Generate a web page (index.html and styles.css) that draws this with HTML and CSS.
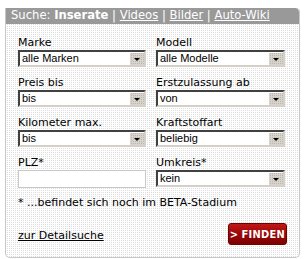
FILE: index.html
```html
<!DOCTYPE html>
<html lang="de">
<head>
  <meta charset="UTF-8">
  <title>Suche</title>
  <link rel="stylesheet" href="styles.css">
</head>
<body>
  <div class="search-box">
    <div class="search-head">
      Suche: <b>Inserate</b> | <a href="#">Videos</a> | <a href="#">Bilder</a> | <a href="#">Auto-Wiki</a>
    </div>

    <div class="search-body">
      <div class="fields">
        <div class="field">
          <label>Marke</label>
          <div class="select"><span>alle Marken</span><i class="arrow"></i></div>
        </div>
        <div class="field">
          <label>Modell</label>
          <div class="select"><span>alle Modelle</span><i class="arrow"></i></div>
        </div>
        <div class="field">
          <label>Preis bis</label>
          <div class="select"><span>bis</span><i class="arrow"></i></div>
        </div>
        <div class="field">
          <label>Erstzulassung ab</label>
          <div class="select"><span>von</span><i class="arrow"></i></div>
        </div>
        <div class="field">
          <label>Kilometer max.</label>
          <div class="select"><span>bis</span><i class="arrow"></i></div>
        </div>
        <div class="field">
          <label>Kraftstoffart</label>
          <div class="select"><span>beliebig</span><i class="arrow"></i></div>
        </div>
        <div class="field">
          <label>PLZ*</label>
          <input type="text" class="text-input">
        </div>
        <div class="field">
          <label>Umkreis*</label>
          <div class="select"><span>kein</span><i class="arrow"></i></div>
        </div>
      </div>

      <p class="note">* ...befindet sich noch im BETA-Stadium</p>

      <div class="actions">
        <a href="#" class="detail-link">zur Detailsuche</a>
        <button type="button" class="btn-find"><span class="chev">&gt;</span>FINDEN</button>
      </div>
    </div>
  </div>
</body>
</html>
```

FILE: styles.css
```css
body {
  margin: 0;
  background: #fff;
  font-family: "DejaVu Sans", Verdana, sans-serif;
  font-size: 11px;
  color: #000;
}

.search-box {
  width: 293px;
  margin: 8px 0 0 5px;
  border: 1px solid #c8c8c8;
  border-top: none;
  border-radius: 0 4px 5px 5px;
  background-color: #fff;
  background-image: conic-gradient(#dedede 25%, #fff 0);
  background-size: 2px 2px;
  overflow: hidden;
}

.search-head {
  background: #999;
  color: #fff;
  font-size: 11.6px;
  height: 16px;
  line-height: 15px;
  padding: 0 5px;
  border-radius: 0 4px 0 0;
  white-space: nowrap;
}

.search-head a {
  color: #fff;
}

.search-body {
  padding: 12px 13px 12px 12px;
}

.fields {
  display: grid;
  grid-template-columns: 128px 129px;
  column-gap: 10px;
  row-gap: 9px;
}

.field label {
  display: block;
  line-height: 14px;
}

.select {
  display: flex;
  align-items: center;
  height: 13px;
  border: 2px solid;
  border-color: #404040 #d4d0c8 #d4d0c8 #404040;
  background: #fff;
  font-family: "Liberation Sans", Arial, sans-serif;
  font-size: 11px;
  padding-left: 2px;
}

.select span {
  flex: 1;
  line-height: 13px;
}

.arrow {
  width: 14px;
  height: 12px;
  background-color: #d4d0c8;
  background-image: conic-gradient(#bdb6ad 25%, #d8d3cc 0);
  background-size: 2px 2px;
  border-left: 1px solid #fff;
  position: relative;
}

.arrow::after {
  content: "";
  position: absolute;
  left: 4px;
  top: 5px;
  border-left: 3px solid transparent;
  border-right: 3px solid transparent;
  border-top: 3px solid #000;
}

.text-input {
  display: block;
  box-sizing: border-box;
  width: 128px;
  height: 18px;
  margin: 0;
  border: 1px solid #c8c8c8;
  background: #fff;
}

.note {
  margin: 8px 0 0 0;
  line-height: 14px;
}

.actions {
  display: flex;
  justify-content: space-between;
  align-items: center;
  margin-top: 13px;
}

.detail-link {
  color: #000;
  padding-top: 2px;
}

.btn-find {
  width: 59px;
  height: 22px;
  margin-right: -1px;
  border: 1px solid #6e0000;
  border-radius: 3px;
  background: linear-gradient(#c01818, #9a0606 50%, #7e0000);
  color: #fff;
  font-family: "DejaVu Sans Condensed", "DejaVu Sans", sans-serif;
  font-weight: bold;
  font-size: 11px;
  letter-spacing: 0.3px;
  padding: 0;
  cursor: pointer;
}

.chev {
  margin-right: 3px;
}
```
